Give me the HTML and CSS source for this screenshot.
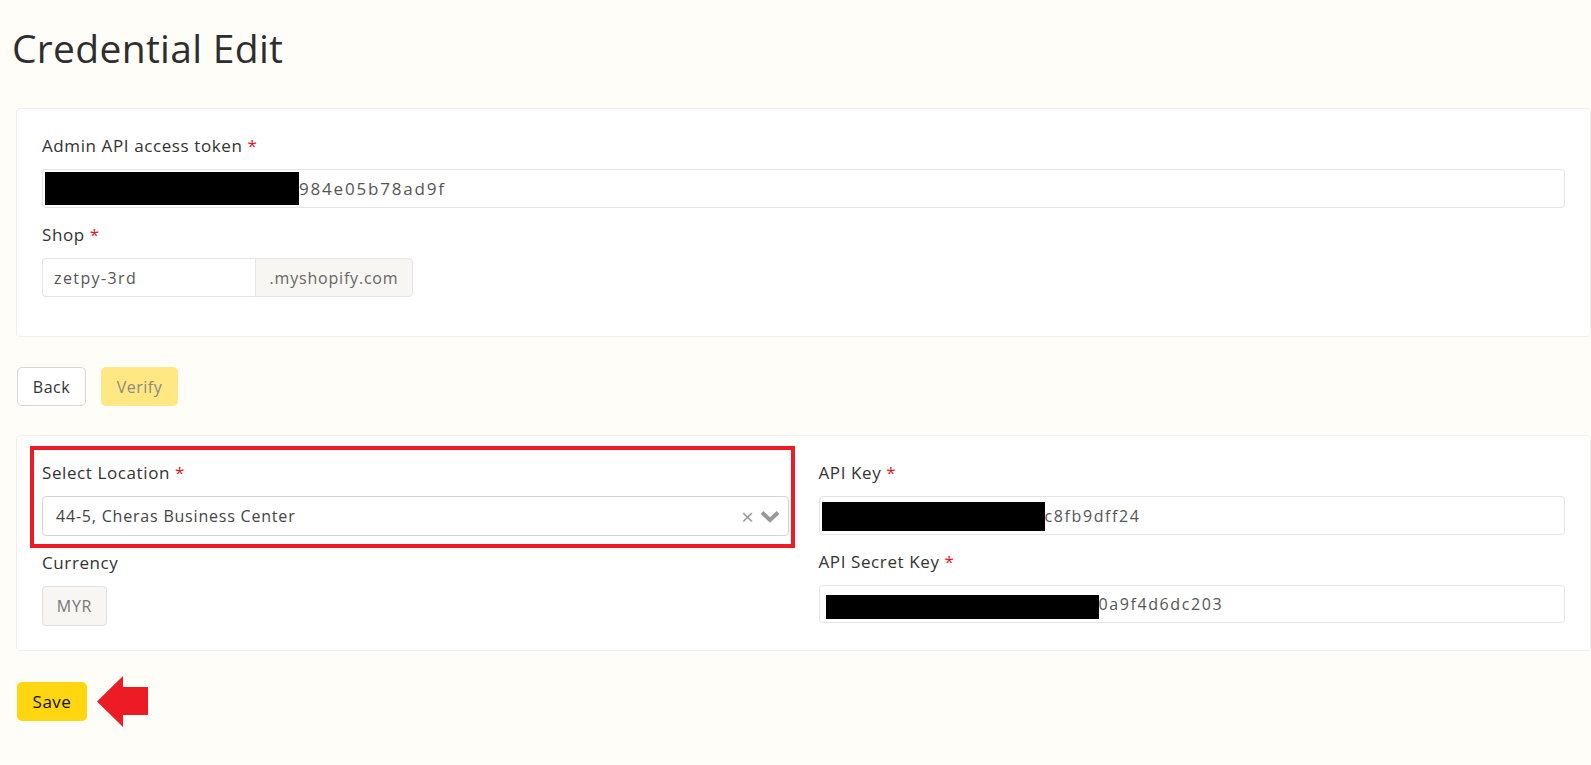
FILE: index.html
```html
<!DOCTYPE html>
<html>
<head>
    <meta charset="UTF-8">
    <link rel="stylesheet" href="styles.css">
</head>
<body>
    <div class="page">
        <h1>Credential Edit</h1>

        <!-- Shopify credentials -->
        <div class="card">
            <div class="form-group">
                <label>Admin API access token <span class="req">*</span></label>
                <div class="field field-token">
                    <span class="redact redact-token"></span>984e05b78ad9f
                </div>
            </div>

            <div class="form-group">
                <label>Shop <span class="req">*</span></label>
                <div class="input-group">
                    <div class="field field-shop">zetpy-3rd</div>
                    <div class="addon">.myshopify.com</div>
                </div>
            </div>
        </div>

        <div class="actions">
            <button class="btn btn-back">Back</button>
            <button class="btn btn-verify">Verify</button>
        </div>

        <!-- Location & keys -->
        <div class="card card-grid">
            <div class="col">
                <div class="form-group highlight-wrap">
                    <div class="highlight-box"></div>
                    <label>Select Location <span class="req">*</span></label>
                    <div class="field select">
                        <span class="select-value">44-5, Cheras Business Center</span>
                        <span class="select-clear">×</span>
                        <svg class="select-arrow" width="20" height="13" viewBox="0 0 20 13">
                            <path d="M2 2.5 L10 10 L18 2.5" fill="none" stroke="#9a9a9a" stroke-width="4"/>
                        </svg>
                    </div>
                </div>
                <div class="form-group">
                    <label>Currency</label>
                    <div class="currency">MYR</div>
                </div>
            </div>
            <div class="col">
                <div class="form-group">
                    <label>API Key <span class="req">*</span></label>
                    <div class="field field-key">
                        <span class="redact redact-key"></span>c8fb9dff24
                    </div>
                </div>
                <div class="form-group">
                    <label class="label-secret">API Secret Key <span class="req">*</span></label>
                    <div class="field field-secret">
                        <span class="redact redact-secret"></span>0a9f4d6dc203
                    </div>
                </div>
            </div>
        </div>

        <div class="save-row">
            <button class="btn btn-save">Save</button>
            <svg class="pointer" width="51" height="51" viewBox="0 0 51 51">
                <polygon points="0,25.5 26,0 26,11 51,11 51,39 26,39 26,51" fill="#ed1c24"/>
            </svg>
        </div>
    </div>
</body>
</html>
```

FILE: styles.css
```css
/* Base */
body {
    margin: 0;
    background-color: #fffdf8;
    font-family: 'Open Sans', 'Lato', sans-serif;
    color: #333;
}

.page {
    padding: 25px 0 40px 16px;
}

h1 {
    margin: 0 0 37px -4px;
    font-size: 39px;
    line-height: 46px;
    font-weight: 500;
    color: #2e2e2e;
    letter-spacing: 0.3px;
}

/* Cards */
.card {
    background-color: #fff;
    border: 1px solid #f1efea;
    border-radius: 4px;
    padding: 27px 25px 39px 25px;
}

.card-grid {
    display: grid;
    grid-template-columns: 1fr 1fr;
    column-gap: 30px;
    padding-bottom: 24px;
}

/* Form */
.form-group + .form-group {
    margin-top: 17px;
}

label {
    display: block;
    font-size: 17px;
    line-height: 20px;
    font-weight: 500;
    margin-bottom: 13px;
    color: #333;
    letter-spacing: 0.6px;
}

.req {
    color: #e5131b;
}

.label-secret {
    margin-top: 4px;
    margin-bottom: 13px;
}

.field {
    box-sizing: border-box;
    height: 39px;
    display: flex;
    align-items: center;
    border: 1px solid #e4e4e4;
    border-radius: 4px;
    background: #fff;
    font-size: 16px;
    color: #555;
    letter-spacing: 1.6px;
    padding: 0 12px;
}

.field-token {
    font-size: 17px;
    letter-spacing: 1.8px;
}

.field-token,
.field-key,
.field-secret {
    padding: 0 2px;
}

.redact {
    display: inline-block;
    background: #000;
}

.redact-token {
    width: 254px;
    height: 33px;
}

.redact-key {
    width: 223px;
    height: 29px;
    margin-top: 2px;
}

.redact-secret {
    width: 273px;
    height: 24px;
    margin-left: 4px;
    margin-top: 6px;
}

.field-secret {
    height: 38px;
}

/* Input group */
.input-group {
    display: flex;
    width: 371px;
}

.field-shop {
    width: 213px;
    border-radius: 4px 0 0 4px;
    border-right: none;
    padding-left: 11px;
    letter-spacing: 1.4px;
}

.addon {
    box-sizing: border-box;
    width: 158px;
    height: 39px;
    display: flex;
    align-items: center;
    justify-content: center;
    background: #f7f6f3;
    border: 1px solid #e4e4e4;
    border-radius: 0 4px 4px 0;
    font-size: 16px;
    color: #666;
    letter-spacing: 0.8px;
}

/* Buttons */
.actions {
    display: flex;
    gap: 15px;
    margin: 30px 0 29px 1px;
}

.btn {
    box-sizing: border-box;
    height: 39px;
    border-radius: 5px;
    font-family: inherit;
    font-size: 16px;
    letter-spacing: 0.5px;
    padding: 0;
    cursor: pointer;
}

.btn-back {
    width: 69px;
    background: #fff;
    border: 1px solid #d6d6d6;
    color: #333;
}

.btn-verify {
    width: 77px;
    background: #ffe784;
    border: none;
    color: #8c8a7d;
}

.btn-save {
    width: 70px;
    background: #ffd60f;
    border: none;
    color: #111;
    font-size: 17px;
}

/* Select */
.highlight-wrap {
    position: relative;
}

.highlight-box {
    position: absolute;
    left: -12px;
    right: -6px;
    top: -17px;
    height: 102px;
    box-sizing: border-box;
    border: 4px solid #ed1c24;
    pointer-events: none;
}

.select {
    height: 40px;
    padding: 0 8px 0 13px;
    border-color: #d4d4d4;
    color: #444;
}

.select-value {
    flex: 1;
    letter-spacing: 0.8px;
}

.select-clear {
    color: #999;
    font-size: 22px;
    margin-right: 4px;
}

.currency {
    box-sizing: border-box;
    width: 65px;
    height: 40px;
    display: flex;
    align-items: center;
    justify-content: center;
    background: #f7f6f3;
    border: 1px solid #e0e0e0;
    border-radius: 4px;
    font-size: 16px;
    color: #777;
    letter-spacing: 0.8px;
}

/* Save row */
.save-row {
    display: flex;
    align-items: center;
    margin: 24px 0 0 1px;
}

.pointer {
    margin-left: 10px;
    margin-top: 1px;
}
```
